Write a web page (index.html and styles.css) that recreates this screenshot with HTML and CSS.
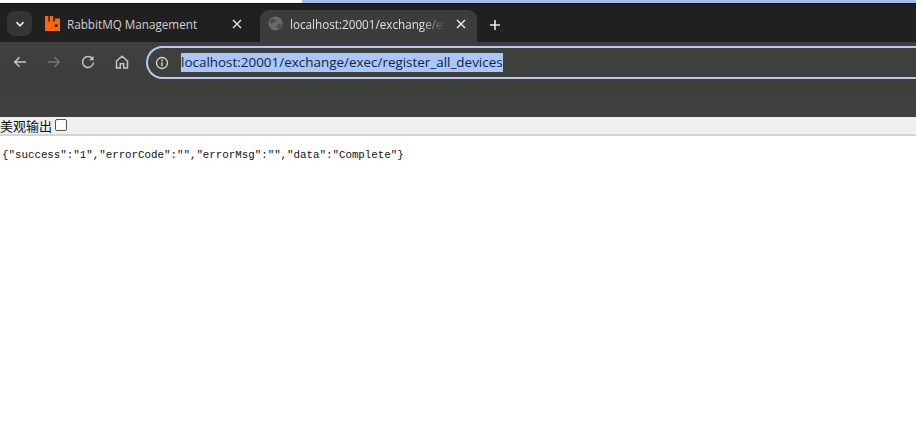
FILE: index.html
```html
<!DOCTYPE html>
<html lang="zh">
<head>
<meta charset="utf-8">
<title>localhost:20001/exchange/exec/register_all_devices</title>
<link rel="stylesheet" href="styles.css">
</head>
<body>
<div class="top-strip"><div class="strip-white"></div><div class="strip-blue"></div></div>
<div class="tabstrip">
  <button class="tab-menu" aria-label="Tab menu">
    <svg width="10" height="10" viewBox="0 0 10 10"><path d="M1.5 3.2 5 6.8l3.5-3.6" fill="none" stroke="#e8e8e8" stroke-width="1.7"/></svg>
  </button>
  <div class="tab tab-inactive">
    <svg class="fav" width="15" height="15" viewBox="0 0 15 15"><path d="M0 0h3.4v5.600h1.400V0h3.400v5.600H10V2.600h5V15H0z" fill="#f76808"/><rect x="9.800" y="8.400" width="2.600" height="2.600" fill="#2a1c10"/></svg>
    <span class="tab-title">RabbitMQ Management</span>
    <svg class="close" width="10" height="10" viewBox="0 0 10 10"><path d="M1 1l8 8M9 1l-8 8" stroke="#e4e4e4" stroke-width="1.4"/></svg>
  </div>
  <div class="tab tab-active">
    <svg class="fav" width="15" height="15" viewBox="0 0 15 15"><circle cx="7.500" cy="7.500" r="7" fill="#6a6a6a"/><path d="M4 2.500 8 4 6.500 7 3 7.500 1.500 5.500zM9 8.500l4-1 .5 3-3 3-1.500-2z" fill="#4c4c4c"/></svg>
    <span class="tab-title tab-fade">localhost:20001/exchange/exec/register_all_devices</span>
    <svg class="close" width="10" height="10" viewBox="0 0 10 10"><path d="M1 1l8 8M9 1l-8 8" stroke="#f0f0f0" stroke-width="1.4"/></svg>
  </div>
  <svg class="plus" width="12" height="12" viewBox="0 0 12 12"><path d="M6 1v10M1 6h10" stroke="#e8e8e8" stroke-width="1.6"/></svg>
</div>
<div class="toolbar">
  <div class="nav-row">
    <svg class="nav" width="16" height="16" viewBox="0 0 16 16"><path d="M14 8H3M7.500 3.200 2.800 8l4.700 4.800" fill="none" stroke="#c4c6c8" stroke-width="1.500"/></svg>
    <svg class="nav" width="16" height="16" viewBox="0 0 16 16"><path d="M2 8h11M8.500 3.200 13.200 8l-4.700 4.800" fill="none" stroke="#737577" stroke-width="1.500"/></svg>
    <svg class="nav" width="16" height="16" viewBox="0 0 16 16"><path d="M12.800 5.200A5.500 5.500 0 1 0 13.500 8.500" fill="none" stroke="#c4c6c8" stroke-width="1.500"/><path d="M13.500 1.800v4.400H9.200z" fill="#c4c6c8"/></svg>
    <svg class="nav" width="16" height="16" viewBox="0 0 16 16"><path d="M2.500 7 8 2.200 13.500 7v7H9.700V9.800H6.300V14H2.500z" fill="none" stroke="#c4c6c8" stroke-width="1.500"/></svg>
  </div>
  <div class="omnibox">
    <svg class="info" width="14" height="14" viewBox="0 0 14 14"><circle cx="7" cy="7" r="5.500" fill="none" stroke="#dcdcdc" stroke-width="1.300"/><path d="M7 6.200v4" stroke="#dcdcdc" stroke-width="1.400"/><circle cx="7" cy="4.300" r=".9" fill="#dcdcdc"/></svg>
    <span class="url">localhost:20001/exchange/exec/register_all_devices</span>
  </div>
</div>
<div class="page-bar">
  <label class="pretty">美观输出<span class="checkbox"></span></label>
</div>
<pre class="json">{"success":"1","errorCode":"","errorMsg":"","data":"Complete"}</pre>
</body>
</html>
```
FILE: styles.css
```css
* { box-sizing: border-box; }
html, body { margin: 0; padding: 0; height: 100%; overflow: hidden; background: #fff; }
body { font-family: "Open Sans", "Liberation Sans", sans-serif; }

.top-strip { display: flex; height: 4px; border-bottom: 1px solid #0c0c0c; }
.strip-white { width: 302px; background: #fdfdff; }
.strip-blue { flex: 1; background: #a6bdec; }

.tabstrip { display: flex; align-items: flex-end; height: 38px; background: #202020; padding-left: 7px; }
.tab-menu { flex: none; align-self: flex-start; display: flex; align-items: center; justify-content: center; width: 25px; height: 25px; margin-top: 7px; padding: 0; border: 0; border-radius: 8px; background: #343434; }
.tab { display: flex; align-items: center; height: 32px; flex: none; }
.tab-inactive { width: 217px; padding: 0 6px 5px 13px; }
.tab-active { width: 217px; margin-left: 11px; padding: 0 11px 5px 8px; background: #3c3c3c; border-radius: 9px 9px 0 0; }
.fav { flex: none; margin: 0 7px 0 0; }
.tab-title { flex: 1; min-width: 0; overflow: hidden; white-space: nowrap; font-size: 11.700px; color: #d0d0d0; }
.tab-fade { color: #e0e0e0; -webkit-mask-image: linear-gradient(to right, #000 82%, transparent 97%); mask-image: linear-gradient(to right, #000 82%, transparent 97%); }
.close { flex: none; margin-left: 6px; }
.tab-inactive .close { margin-right: 1px; }
.plus { flex: none; align-self: flex-start; margin: 15px 0 0 12px; }

.toolbar { display: flex; align-items: flex-start; height: 75px; padding: 4px 0 0 12px; background: linear-gradient(#3f3f3f, #3c3f3c 60%, #414141); }
.nav-row { display: flex; gap: 18px; margin-top: 8px; flex: none; width: 134px; }
.nav { flex: none; }
.omnibox { display: flex; align-items: center; flex: 1; min-width: 0; height: 33px; padding-left: 7px; border: 2px solid #b7c9ee; border-right: 0; border-radius: 17px 0 0 17px; background: #3e403e; }
.info { flex: none; margin-right: 12px; }
.url { background: #a8c7fa; color: #17233a; font-size: 13.450px; line-height: 19px; white-space: nowrap; }

.page-bar { display: flex; align-items: center; height: 19px; padding-bottom: 1px; background: #f0f0f0; border-bottom: 2px solid #d4d4d4; }
.pretty { display: flex; align-items: center; font-family: "Noto Sans CJK SC", sans-serif; font-size: 13px; color: #111; }
.checkbox { width: 12px; height: 12px; margin-left: 3px; border: 1px solid #555; border-radius: 2px; background: #fff; }

.json { margin: 12px 0 0 2px; font-family: "Liberation Mono", monospace; font-size: 10.800px; line-height: 14px; color: #111; }
```
